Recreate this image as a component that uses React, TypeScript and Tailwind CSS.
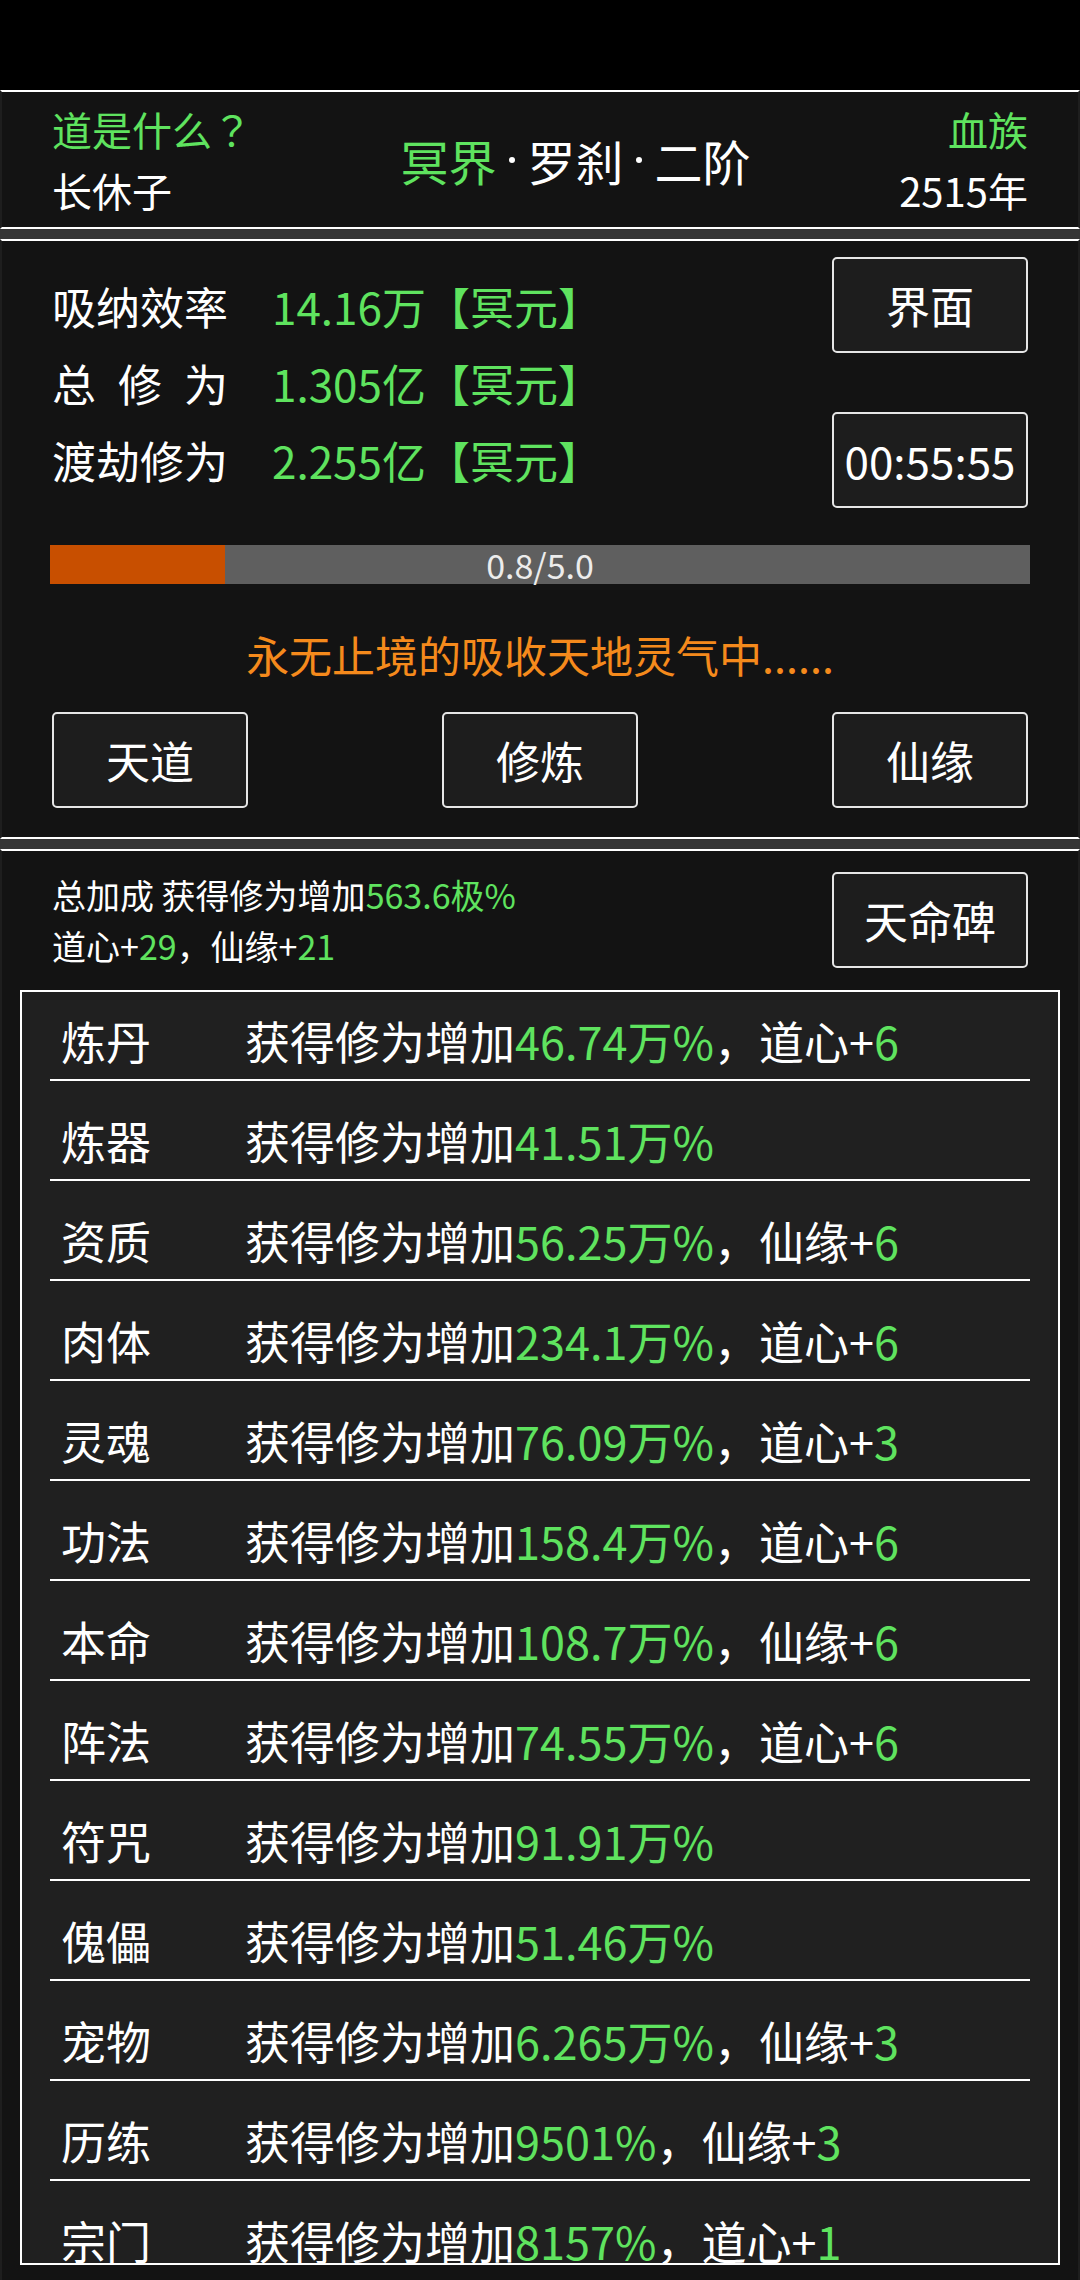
import React from 'react';

type Row = { name: string; value: string; extra?: [string, string] };

const rows: Row[] = [
  { name: '炼丹', value: '46.74万%', extra: ['道心+', '6'] },
  { name: '炼器', value: '41.51万%' },
  { name: '资质', value: '56.25万%', extra: ['仙缘+', '6'] },
  { name: '肉体', value: '234.1万%', extra: ['道心+', '6'] },
  { name: '灵魂', value: '76.09万%', extra: ['道心+', '3'] },
  { name: '功法', value: '158.4万%', extra: ['道心+', '6'] },
  { name: '本命', value: '108.7万%', extra: ['仙缘+', '6'] },
  { name: '阵法', value: '74.55万%', extra: ['道心+', '6'] },
  { name: '符咒', value: '91.91万%' },
  { name: '傀儡', value: '51.46万%' },
  { name: '宠物', value: '6.265万%', extra: ['仙缘+', '3'] },
  { name: '历练', value: '9501%', extra: ['仙缘+', '3'] },
  { name: '宗门', value: '8157%', extra: ['道心+', '1'] },
];

const Btn = ({ children }: { children: React.ReactNode }) => (
  <div className="flex h-[96px] w-[196px] items-center justify-center rounded-[5px] border-2 border-[#e6e6e6] bg-[#1d1d1d] text-[44px] leading-none text-white">
    {children}
  </div>
);

const panel =
  'border-l-2 border-r-2 border-l-[#1e1e1e] border-r-[#1e1e1e] border-t-2 border-t-white bg-[#131313]';

const Strip = () => <div className="h-[10px] bg-[#353535]" />;

// middle dot between title parts
const Dot = () => (
  <span className="flex w-[31px] justify-center">
    <span className="h-[6px] w-[6px] rounded-full bg-white" />
  </span>
);

export default function App() {
  return (
    <div className="min-h-[2280px] w-full overflow-hidden bg-black font-['Noto_Sans_CJK_SC','Noto_Sans',sans-serif] text-white">
      <div className="h-[90px] bg-black" />

      {/* header */}
      <div className={`${panel} flex h-[139px] items-center justify-between border-b-2 border-b-white px-[50px]`}>
        <div className="flex flex-col text-[40px] leading-[61px]">
          <span className="text-[#5fe35f]">
            道是什么<span className="font-['Noto_Sans_CJK_TC',sans-serif]">？</span>
          </span>
          <span>长休子</span>
        </div>
        <div className="flex items-center text-[48px] leading-none">
          <span className="text-[#5fe35f]">冥界</span>
          <Dot />
          <span>罗刹</span>
          <Dot />
          <span>二阶</span>
        </div>
        <div className="flex flex-col items-end text-[40px] leading-[61px]">
          <span className="text-[#5fe35f]">血族</span>
          <span>2515年</span>
        </div>
      </div>

      <Strip />

      {/* cultivation */}
      <div className={`${panel} h-[600px] border-b-2 border-b-white px-[48px] pt-[16px]`}>
        <div className="flex items-center justify-between pr-[2px]">
          <div className="flex flex-col pl-[2px] text-[44px]">
            <div className="flex h-[77px] items-center">
              <span className="w-[176px]">吸纳效率</span>
              <span className="ml-[44px] text-[#5fe35f]">14.16万【冥元】</span>
            </div>
            <div className="flex h-[77px] items-center">
              <span className="flex w-[176px] justify-between">
                <span>总</span>
                <span>修</span>
                <span>为</span>
              </span>
              <span className="ml-[44px] text-[#5fe35f]">1.305亿【冥元】</span>
            </div>
            <div className="flex h-[77px] items-center">
              <span className="w-[176px]">渡劫修为</span>
              <span className="ml-[44px] text-[#5fe35f]">2.255亿【冥元】</span>
            </div>
          </div>
          <div className="flex h-[251px] flex-col justify-between">
            <Btn>界面</Btn>
            <Btn>00:55:55</Btn>
          </div>
        </div>

        <div className="relative mt-[37px] h-[39px] bg-[#5f5f5f]">
          <div className="h-full w-[175px] bg-[#c84f00]" />
          <div className="absolute inset-0 flex items-center justify-center text-[34px] leading-none text-[#ececec]">
            0.8/5.0
          </div>
        </div>

        <div className="mt-[40px] h-[60px] text-center text-[43px] leading-[60px] text-[#f58a1c]">
          永无止境的吸收天地灵气中......
        </div>

        <div className="mt-[28px] flex justify-between px-[2px]">
          <Btn>天道</Btn>
          <Btn>修炼</Btn>
          <Btn>仙缘</Btn>
        </div>
      </div>

      <Strip />

      {/* bonuses */}
      <div className={`${panel} h-[1431px] pt-[18px]`}>
        <div className="flex items-center justify-between px-[50px]">
          <div className="flex flex-col text-[34px] leading-[51px]">
            <span>
              总加成 获得修为增加<span className="text-[#5fe35f]">563.6极%</span>
            </span>
            <span>
              道心+<span className="text-[#5fe35f]">29</span>，仙缘+<span className="text-[#5fe35f]">21</span>
            </span>
          </div>
          <Btn>天命碑</Btn>
        </div>

        <div className="mx-[18px] mt-[19px] h-[1275px] overflow-hidden border-2 border-white bg-[#202020] px-[28px]">
          {rows.map((r) => (
            <div key={r.name} className="border-b-2 border-white pb-[8px] pt-[30px] first:pt-[19px]">
              <div className="flex h-[60px] items-center whitespace-nowrap pl-[11px] text-[45px]">
                <span className="w-[184px] shrink-0">{r.name}</span>
                <span>
                  获得修为增加<span className="text-[#5fe35f]">{r.value}</span>
                  {r.extra && (
                    <>
                      ，{r.extra[0]}
                      <span className="text-[#5fe35f]">{r.extra[1]}</span>
                    </>
                  )}
                </span>
              </div>
            </div>
          ))}
        </div>
      </div>
    </div>
  );
}
